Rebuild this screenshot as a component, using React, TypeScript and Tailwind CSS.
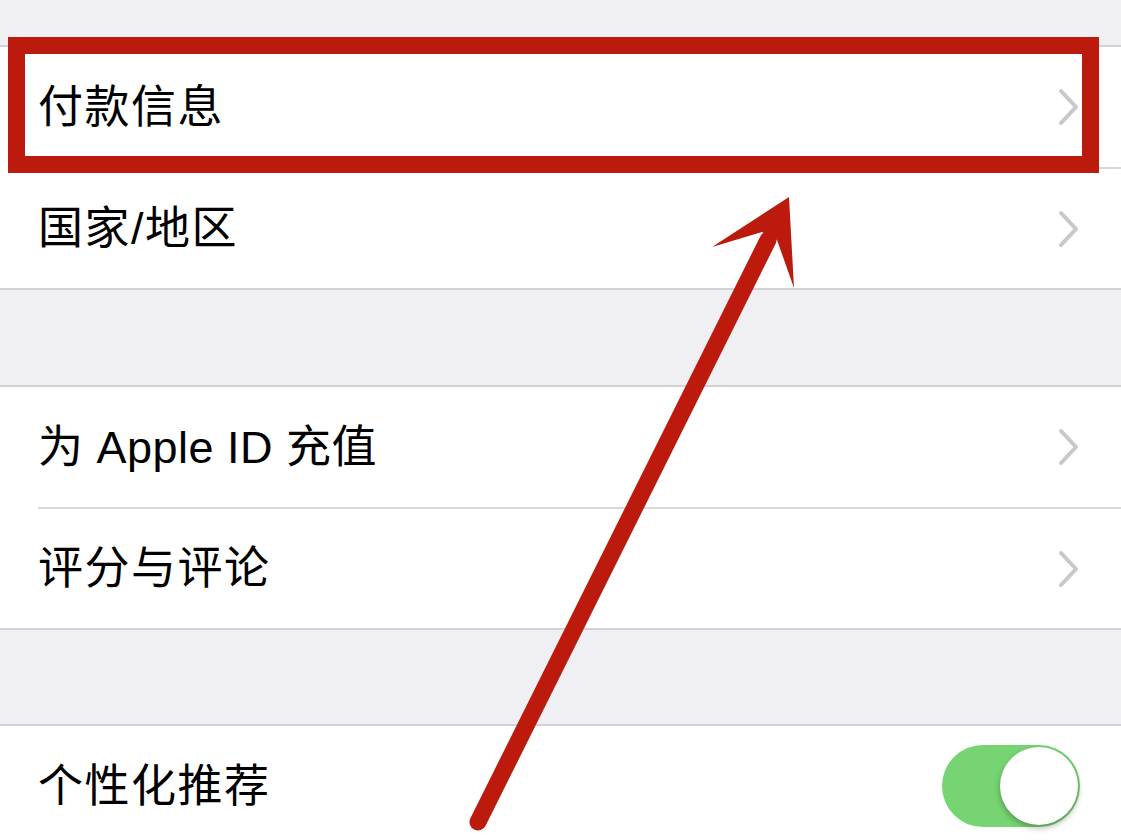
import React from "react";

const Chevron = () => (
  <svg width="24" height="40" viewBox="0 0 24 40" className="mr-[40px]">
    <path d="M4 4 L19 20 L4 36" fill="none" stroke="#c7c7cc" strokeWidth="4" strokeLinecap="round" strokeLinejoin="round" />
  </svg>
);

const Row = ({ label, h, toggle, wide }: { label: string; h: string; toggle?: boolean; wide?: boolean }) => (
  <div className={`flex items-center justify-between pl-[38px] bg-white ${h}`}>
    <span
      className={`text-[45px] text-black leading-none ${wide ? "tracking-[1.5px]" : "tracking-[0.5px]"}`}
      style={{ fontFamily: '"Liberation Sans", "Noto Sans CJK SC", sans-serif' }}
    >
      {label}
    </span>
    {toggle ? (
      <div className="mr-[41px] w-[138px] h-[82px] rounded-full bg-[#76d572] relative">
        <div className="absolute right-[2px] top-[2px] w-[78px] h-[78px] rounded-full bg-white shadow-[0_3px_6px_rgba(0,0,0,0.3)]" />
      </div>
    ) : (
      <Chevron />
    )}
  </div>
);

export default function App() {
  return (
    <div className="relative w-[1121px] h-[840px] overflow-hidden bg-[#efeff4]">
      <div className="h-[45px] bg-[#efeff4]" />
      <div className="h-[2px] bg-[#d2d2d6]" />
      <Row label="付款信息" h="h-[120px]" wide />
      <div className="bg-white pl-[38px]"><div className="h-[2px] bg-[#d8d8dc]" /></div>
      <Row label="国家/地区" h="h-[119px]" wide />
      <div className="h-[2px] bg-[#d2d2d6]" />
      <div className="h-[95px] bg-[#efeff4]" />
      <div className="h-[2px] bg-[#d2d2d6]" />
      <Row label="为 Apple ID 充值" h="h-[120px]" />
      <div className="bg-white pl-[38px]"><div className="h-[2px] bg-[#d8d8dc]" /></div>
      <Row label="评分与评论" h="h-[119px]" wide />
      <div className="h-[2px] bg-[#d2d2d6]" />
      <div className="h-[94px] bg-[#efeff4]" />
      <div className="h-[2px] bg-[#d2d2d6]" />
      <Row label="个性化推荐" h="h-[120px]" toggle wide />

      <div className="absolute left-[8px] top-[37px] w-[1091px] h-[136px] border-[17px] border-[#bd1a0e]" />

      <svg className="absolute left-0 top-0" width="1121" height="840" viewBox="0 0 1121 840">
        <line x1="478" y1="822" x2="768" y2="240" stroke="#bd1a0e" strokeWidth="17" strokeLinecap="round" />
        <polygon points="789,197 712,247 762,232 777,240 794,288" fill="#bd1a0e" />
      </svg>
    </div>
  );
}
